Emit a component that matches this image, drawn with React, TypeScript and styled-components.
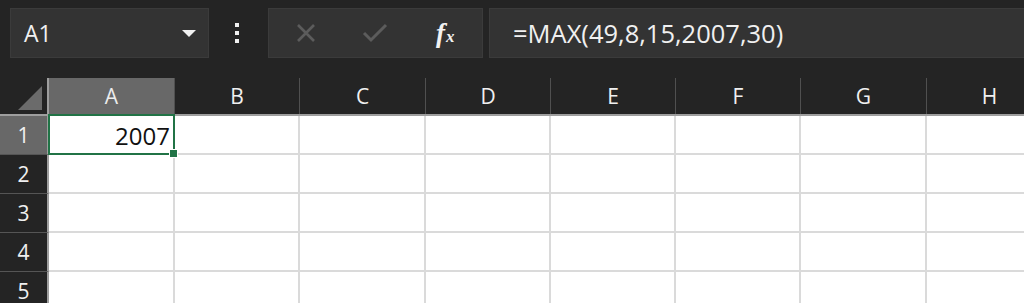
import React from 'react';
import styled, { createGlobalStyle } from 'styled-components';

const GlobalStyle = createGlobalStyle`
  html, body {
    margin: 0;
    padding: 0;
    background: #242424;
    overflow: hidden;
  }
  body {
    font-family: 'Open Sans', 'Noto Sans', sans-serif;
  }
`;

const columns = ['A', 'B', 'C', 'D', 'E', 'F', 'G', 'H'];
const colWidths = [126, 125, 126, 125, 125, 125, 126, 126];
const rows = [1, 2, 3, 4, 5];

function App() {
  return (
    <Page>
      <GlobalStyle />
      <Toolbar>
        <NameBox>
          <NameText>A1</NameText>
          <DropArrow />
        </NameBox>
        <DotsArea>
          <Dots>
            <Dot />
            <Dot />
            <Dot />
          </Dots>
        </DotsArea>
        <FxGroup>
          <IconButton $width={67}>
            <svg width="22" height="22" viewBox="0 0 22 22">
              <path d="M3 3 L19 19 M19 3 L3 19" stroke="#5c5c5c" strokeWidth="2.6" fill="none" />
            </svg>
          </IconButton>
          <IconButton $width={74}>
            <svg width="26" height="22" viewBox="0 0 26 22">
              <path d="M2 11 L9 18 L24 3" stroke="#5c5c5c" strokeWidth="3" fill="none" />
            </svg>
          </IconButton>
          <FxButton>
            <FxText>
              f<FxSub>x</FxSub>
            </FxText>
          </FxButton>
        </FxGroup>
        <FormulaBox>=MAX(49,8,15,2007,30)</FormulaBox>
      </Toolbar>
      <Sheet>
        <HeaderRow>
          <Corner>
            <CornerTriangle />
          </Corner>
          {columns.map((c, i) => (
            <ColHeader key={c} $selected={i === 0} style={{ width: colWidths[i] }}>
              {c}
            </ColHeader>
          ))}
        </HeaderRow>
        {rows.map((r) => (
          <Row key={r}>
            <RowHeader $selected={r === 1}>{r}</RowHeader>
            {columns.map((c, i) => (
              <Cell key={c} style={{ width: colWidths[i] }}>
                {r === 1 && i === 0 && (
                  <ActiveCell>
                    <CellValue>2007</CellValue>
                    <FillHandle />
                  </ActiveCell>
                )}
              </Cell>
            ))}
          </Row>
        ))}
      </Sheet>
    </Page>
  );
}

const Page = styled.div`
  width: 1024px;
  height: 303px;
  overflow: hidden;
  background: #242424;
`;

const Toolbar = styled.div`
  display: flex;
  align-items: stretch;
  height: 50px;
  padding: 8px 0 0 10px;
  margin-bottom: 20px;
  background: #242424;
`;

const NameBox = styled.div`
  width: 199px;
  box-sizing: border-box;
  display: flex;
  align-items: center;
  justify-content: space-between;
  padding: 0 12px 0 13px;
  background: #333333;
  border: 1px solid #3b3b3b;
`;

const NameText = styled.span`
  color: #f0f0f0;
  font-size: 23px;
  margin-top: -1px;
`;

const DropArrow = styled.span`
  width: 0;
  height: 0;
  border-left: 7px solid transparent;
  border-right: 7px solid transparent;
  border-top: 7px solid #f2f2f2;
`;

const DotsArea = styled.div`
  width: 59px;
  display: flex;
  align-items: center;
  justify-content: center;
`;

const Dots = styled.div`
  display: flex;
  flex-direction: column;
  gap: 4px;
  margin-right: 3px;
`;

const Dot = styled.span`
  width: 4px;
  height: 4px;
  background: #f0f0f0;
`;

const FxGroup = styled.div`
  width: 215px;
  box-sizing: border-box;
  display: flex;
  align-items: center;
  padding-left: 26px;
  background: #333333;
  border: 1px solid #3b3b3b;
`;

const IconButton = styled.div<{ $width: number }>`
  width: ${(p) => p.$width}px;
  display: flex;
  align-items: center;
`;

const FxButton = styled.div`
  display: flex;
  align-items: center;
`;

const FxText = styled.span`
  font-family: 'Liberation Serif', 'DejaVu Serif', serif;
  font-style: italic;
  font-weight: bold;
  font-size: 27px;
  color: #f2f2f2;
`;

const FxSub = styled.span`
  font-size: 17px;
  margin-left: 1px;
`;

const FormulaBox = styled.div`
  flex: 1;
  margin-left: 6px;
  display: flex;
  align-items: center;
  padding-left: 23px;
  font-size: 25.5px;
  color: #f0f0f0;
  background: #333333;
  border: 1px solid #3b3b3b;
  border-right: none;
`;

const Sheet = styled.div`
  display: flex;
  flex-direction: column;
`;

const HeaderRow = styled.div`
  display: flex;
  height: 38px;
  box-sizing: border-box;
  border-bottom: 2px solid #9e9e9e;
`;

const Corner = styled.div`
  width: 49px;
  flex-shrink: 0;
  box-sizing: border-box;
  position: relative;
  background: #242424;
  border-right: 2px solid #9e9e9e;
`;

const CornerTriangle = styled.span`
  position: absolute;
  right: 5px;
  bottom: 4px;
  width: 0;
  height: 0;
  border-left: 24px solid transparent;
  border-bottom: 24px solid #6b6b6b;
`;

const ColHeader = styled.div<{ $selected?: boolean }>`
  flex-shrink: 0;
  box-sizing: border-box;
  display: flex;
  align-items: center;
  justify-content: center;
  font-size: 21px;
  color: ${(p) => (p.$selected ? '#ececec' : '#f0f0f0')};
  background: ${(p) => (p.$selected ? '#686868' : '#242424')};
  border-right: 1px solid #505050;
`;

const Row = styled.div`
  display: flex;
  height: 39px;
`;

const RowHeader = styled.div<{ $selected?: boolean }>`
  width: 49px;
  flex-shrink: 0;
  box-sizing: border-box;
  display: flex;
  align-items: center;
  justify-content: center;
  font-size: 21px;
  color: #f0f0f0;
  background: ${(p) => (p.$selected ? '#686868' : '#242424')};
  border-right: 2px solid #9e9e9e;
  border-bottom: 1px solid #555555;
`;

const Cell = styled.div`
  flex-shrink: 0;
  box-sizing: border-box;
  position: relative;
  background: #ffffff;
  border-right: 2px solid #dadada;
  border-bottom: 2px solid #dadada;
`;

const ActiveCell = styled.div`
  position: absolute;
  left: -1px;
  top: -2px;
  right: -2px;
  bottom: -2px;
  box-sizing: border-box;
  border: 2px solid #217346;
  display: flex;
  align-items: center;
  justify-content: flex-end;
  padding-right: 3px;
  z-index: 2;
`;

const CellValue = styled.span`
  font-family: 'Open Sans', 'Noto Sans', sans-serif;
  font-size: 24px;
  color: #111111;
  margin-top: 2px;
`;

const FillHandle = styled.span`
  position: absolute;
  right: -5px;
  bottom: -5px;
  width: 7px;
  height: 7px;
  background: #217346;
  border: 1px solid #ffffff;
`;

export default App;
